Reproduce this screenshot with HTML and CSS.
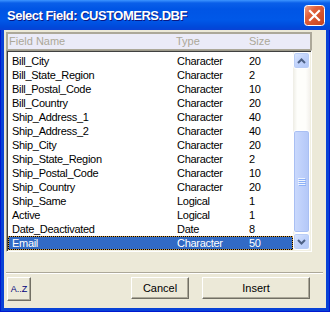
FILE: index.html
```html
<!DOCTYPE html>
<html>
<head>
    <title>Select Field</title>
    <link rel="stylesheet" href="styles.css">
</head>
<body>
    <div class="window">
        <div class="titlebar">
            <span class="title">Select Field: CUSTOMERS.DBF</span>
            <button class="close" title="Close">
                <svg width="21" height="21" viewBox="0 0 21 21">
                    <defs>
                        <linearGradient id="closeFill" x1="0" y1="0" x2="1" y2="1">
                            <stop offset="0" stop-color="#f0a58c"/>
                            <stop offset="0.35" stop-color="#e0603a"/>
                            <stop offset="1" stop-color="#c4411c"/>
                        </linearGradient>
                    </defs>
                    <rect x="0.5" y="0.5" width="20" height="20" rx="3" fill="url(#closeFill)" stroke="#fff"/>
                    <path d="M6 6 L15 15 M15 6 L6 15" stroke="#fff" stroke-width="2.2" stroke-linecap="square"/>
                </svg>
            </button>
        </div>

        <div class="client">
            <div class="list-header">
                <span>Field Name</span>
                <span>Type</span>
                <span>Size</span>
            </div>

            <div class="listbox">
                <div class="rows">
                    <div class="row"><span>Bill_City</span><span>Character</span><span>20</span></div>
                    <div class="row"><span>Bill_State_Region</span><span>Character</span><span>2</span></div>
                    <div class="row"><span>Bill_Postal_Code</span><span>Character</span><span>10</span></div>
                    <div class="row"><span>Bill_Country</span><span>Character</span><span>20</span></div>
                    <div class="row"><span>Ship_Address_1</span><span>Character</span><span>40</span></div>
                    <div class="row"><span>Ship_Address_2</span><span>Character</span><span>40</span></div>
                    <div class="row"><span>Ship_City</span><span>Character</span><span>20</span></div>
                    <div class="row"><span>Ship_State_Region</span><span>Character</span><span>2</span></div>
                    <div class="row"><span>Ship_Postal_Code</span><span>Character</span><span>10</span></div>
                    <div class="row"><span>Ship_Country</span><span>Character</span><span>20</span></div>
                    <div class="row"><span>Ship_Same</span><span>Logical</span><span>1</span></div>
                    <div class="row"><span>Active</span><span>Logical</span><span>1</span></div>
                    <div class="row"><span>Date_Deactivated</span><span>Date</span><span>8</span></div>
                    <div class="row selected"><span>Email</span><span>Character</span><span>50</span></div>
                </div>
                <div class="scrollbar">
                    <div class="sb-btn">
                        <svg width="9" height="6" viewBox="0 0 9 6"><path d="M1 5 L4.5 1.5 L8 5" fill="none" stroke="#4d6185" stroke-width="2"/></svg>
                    </div>
                    <div class="sb-track">
                        <div class="sb-thumb">
                            <svg width="8" height="8" viewBox="0 0 8 8">
                                <path d="M0 0.5 H7 M0 2.5 H7 M0 4.5 H7 M0 6.5 H7" stroke="#eef4fe"/>
                                <path d="M1 1.5 H8 M1 3.5 H8 M1 5.5 H8 M1 7.5 H8" stroke="#8cb0f8"/>
                            </svg>
                        </div>
                    </div>
                    <div class="sb-btn">
                        <svg width="9" height="6" viewBox="0 0 9 6"><path d="M1 1 L4.5 4.5 L8 1" fill="none" stroke="#4d6185" stroke-width="2"/></svg>
                    </div>
                </div>
            </div>

            <div class="separator"></div>

            <div class="buttons">
                <button class="btn az">A..Z</button>
                <button class="btn cancel">Cancel</button>
                <button class="btn insert">Insert</button>
            </div>
        </div>
    </div>
</body>
</html>
```

FILE: styles.css
```css
body {
    margin: 0;
    font-family: "Liberation Sans", Arial, sans-serif;
    font-size: 11px;
}
.window {
    width: 330px;
    height: 312px;
    display: flex;
    flex-direction: column;
    background: #0842d6;
    box-shadow: inset 1px 0 #0019cf, inset -1px 0 #0019cf, inset 0 -1px #0019cf;
}
.titlebar {
    height: 30px;
    flex: none;
    display: flex;
    align-items: center;
    justify-content: space-between;
    padding: 0 5px 0 7px;
    background: linear-gradient(#3d95ff 0, #0a5fe9 3px, #0055e5 9px, #0058e8 20px, #0049da 27px, #0842d6 30px);
}
.title {
    color: #fff;
    font-weight: bold;
    font-size: 13px;
    letter-spacing: -0.5px;
    text-shadow: 1px 1px #0a1883;
    margin-top: 1px;
}
.close {
    width: 21px;
    height: 21px;
    padding: 0;
    border: none;
    background: none;
    display: block;
}
.close svg {
    display: block;
}
.client {
    flex: 1;
    margin: 0 4px 4px;
    background: #ece9d8;
    display: flex;
    flex-direction: column;
}
.list-header {
    margin: 2px 14px 0 2px;
    height: 18px;
    box-sizing: border-box;
    border: 2px solid #aca899;
    border-bottom: 1px solid #aca899;
    background: #ebebf8;
    color: #aca899;
    display: grid;
    grid-template-columns: 167px 73px 1fr;
    padding-left: 1px;
    line-height: 15px;
}
.listbox {
    margin: 0 14px 0 2px;
    height: 202px;
    box-sizing: border-box;
    border: 1px solid;
    border-color: #9d9a8c #fff #fff #9d9a8c;
    box-shadow: inset 1px 1px #404040, inset -1px -1px #f1efe2;
    padding: 1px;
    background: #fff;
    display: flex;
}
.rows {
    flex: 1;
    padding-top: 2px;
}
.row {
    height: 14px;
    line-height: 14px;
    box-sizing: border-box;
    display: grid;
    grid-template-columns: 165px 72px 1fr;
    padding-left: 4px;
    color: #000;
    letter-spacing: -0.3px;
    white-space: nowrap;
}
.row.selected {
    color: #fff;
    border: 1px dotted #d09a3e;
    padding-left: 3px;
    line-height: 12px;
    background: linear-gradient(#316ac5, #316ac5) padding-box, linear-gradient(#000, #000) border-box;
}
.scrollbar {
    width: 17px;
    flex: none;
    display: flex;
    flex-direction: column;
    background: linear-gradient(to right, #eeede5, #fefefb 25%, #fefefb 75%, #f3f1ec);
}
.sb-btn {
    height: 17px;
    flex: none;
    box-sizing: border-box;
    border: 1px solid #fff;
    border-radius: 3px;
    background: linear-gradient(135deg, #dde8fe, #c0d2fb 50%, #b1c6f6);
    box-shadow: inset 0 0 0 1px #b9cdf6;
    display: flex;
    align-items: center;
    justify-content: center;
}
.sb-btn svg {
    display: block;
}
.sb-track {
    flex: 1;
    display: flex;
    flex-direction: column;
    justify-content: flex-end;
}
.sb-thumb {
    height: 103px;
    box-sizing: border-box;
    border: 1px solid #fff;
    border-radius: 3px;
    background: linear-gradient(to right, #cbdafd, #bccefa 60%, #b3c7f7);
    box-shadow: inset 0 0 0 1px #a9bff3;
    display: flex;
    align-items: center;
    justify-content: center;
}
.separator {
    margin: 20px 3px 0 2px;
    height: 2px;
    box-sizing: border-box;
    border-top: 1px solid #aca899;
    border-bottom: 1px solid #fff;
}
.buttons {
    display: flex;
    align-items: flex-start;
    margin: 3px 16px 0 3px;
    gap: 13px;
}
.btn {
    height: 22px;
    padding: 0;
    font-family: "Liberation Sans", Arial, sans-serif;
    font-size: 11px;
    color: #000;
    background: #ece9d8;
    border: 1px solid;
    border-color: #fff #716f64 #716f64 #fff;
    box-shadow: inset -1px -1px #aca899;
}
.btn.az {
    width: 24px;
    height: 24px;
    font-size: 9px;
    color: #00007b;
}
.btn.cancel {
    width: 58px;
    margin-left: auto;
}
.btn.insert {
    width: 108px;
}
```
